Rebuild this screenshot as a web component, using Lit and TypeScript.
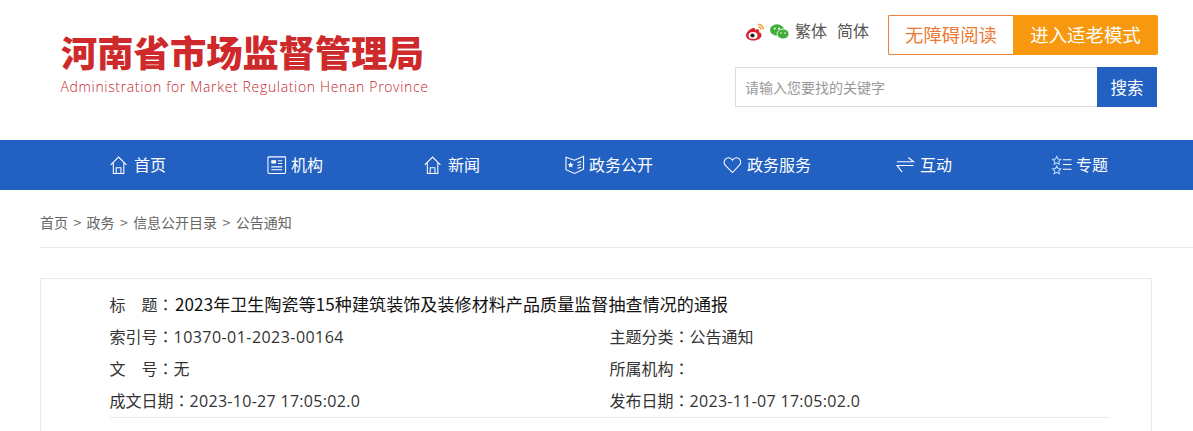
import { LitElement, html, css, svg } from "lit";
import { customElement } from "lit/decorators.js";

const icons: Record<string, unknown> = {
  home: svg`<path d="M.8 11.500 9 3.200l8.200 8.300M3.500 9.200V20.500h11V9.200M6.500 20.500V14.500h5v6"/>`,
  org: svg`<rect x="1" y="3" width="18.500" height="17.500" rx="1"/><rect x="4.500" y="6.500" width="5" height="3.500" fill="#fff" stroke="none"/><path d="M11.500 7h4.500M11.500 10h4.500M4.500 13.500h11.500M4.500 16.500h11.500"/>`,
  book: svg`<path d="M1 3.500 10 6.500 19.500 2.500V16L10 20.500 1 16.500Z"/><path d="M13 9l4-1M13 12l4-1M13 15l4-1"/><path d="m6 8.500 1 2 2 .3-1.500 1.400.4 2-1.900-1-1.900 1 .4-2L3 10.800l2-.3Z" fill="#fff" stroke="none"/>`,
  heart: svg`<path d="M10 19.500 2 11.500C.2 8.500 1.500 4.500 5.500 4c2-.2 3.500.8 4.500 2.500C11 4.800 12.500 3.800 14.500 4c4 .5 5 4.500 3 7.500Z"/>`,
  swap: svg`<path d="M1 8.200H18.500L13 3.700M18.500 12H1L6.500 19"/>`,
  topic: svg`<g stroke="#bcdcff"><path d="m5 2.500 1.300 2.800 3 .4-2.200 2 .6 3-2.700-1.500-2.700 1.500.6-3-2.200-2 3-.4Z"/><path d="m5 12.500 1.300 2.800 3 .4-2.200 2 .6 3-2.700-1.500-2.700 1.500.6-3-2.200-2 3-.4Z"/></g><path d="M11.500 6h9M11.500 11h9M11.500 16h9"/>`,
};

const navItems: [string, string][] = [
  ["home", "首页"],
  ["org", "机构"],
  ["home", "新闻"],
  ["book", "政务公开"],
  ["heart", "政务服务"],
  ["swap", "互动"],
  ["topic", "专题"],
];

const colon = html`<span class="c">：</span>`;

@customElement("app-root")
export class AppRoot extends LitElement {
  static styles = css`
    :host {
      display: block;
      width: 1193px;
      height: 431px;
      overflow: hidden;
      background: #fff;
      font-family: "Noto Sans CJK SC", "Open Sans", sans-serif;
      color: #333;
    }
    .header {
      height: 140px;
      display: flex;
      justify-content: space-between;
      padding: 15px 36px 0 60px;
      box-sizing: border-box;
    }
    .logo { padding-top: 13px; }
    .logo-cn {
      font-size: 36.300px;
      font-weight: 900;
      line-height: 46px;
      margin-left: 1px;
      color: #cf2a2b;
      white-space: nowrap;
    }
    .logo-en {
      font-family: "Open Sans", sans-serif;
      font-size: 14px;
      font-weight: 300;
      line-height: 20px;
      margin-top: 3px;
      margin-left: 0.5px;
      letter-spacing: 0.66px;
      color: #c41f2c;
      white-space: nowrap;
    }
    .tools { width: 422px; }
    .top-row { display: flex; align-items: center; height: 40px; }
    .social { display: flex; align-items: center; gap: 5px; margin: 0 6px 6px 10px; }
    .lang { font-size: 16px; line-height: 24px; color: #555; margin: 0 0 10px 0; }
    .lang + .lang { margin-left: 10px; }
    .btns { margin-left: auto; margin-right: -1px; display: flex; height: 40px; font-size: 18.400px; }
    .btn-a {
      width: 125px;
      box-sizing: border-box;
      border: 1px solid #e8823c;
      border-right: none;
      border-radius: 2px 0 0 2px;
      color: #ee7a36;
      display: flex;
      align-items: center;
      justify-content: center;
      padding-bottom: 2px;
    }
    .btn-b {
      width: 145px;
      box-sizing: border-box;
      background: #f7980f;
      color: #fff;
      border-radius: 0 2px 2px 0;
      display: flex;
      align-items: center;
      justify-content: center;
      padding-bottom: 2px;
    }
    .search { display: flex; height: 40px; margin-top: 12px; }
    .input {
      flex: 1;
      border: 1px solid #ddd;
      border-right: none;
      display: flex;
      align-items: center;
      padding-left: 9px;
      font-size: 14px;
      color: #999;
    }
    .sbtn {
      width: 60px;
      background: #2260c2;
      color: #fff;
      font-size: 16.500px;
      display: flex;
      align-items: center;
      justify-content: center;
    }
    nav {
      height: 50px;
      background: #2260c2;
      display: grid;
      grid-template-columns: 157px 157px 141px 158px 173px 156px 1fr;
      padding-left: 110px;
      box-sizing: border-box;
    }
    .nav-item {
      display: flex;
      align-items: center;
      gap: 4px;
      color: #fff;
      font-size: 16px;
      white-space: nowrap;
      padding-bottom: 2px;
      box-sizing: border-box;
    }
    .nav-item svg {
      width: 20px;
      height: 20px;
      fill: none;
      stroke: #fff;
      stroke-width: 1.100;
      overflow: visible;
    }
    .crumb {
      margin: 0 0 0 40px;
      height: 58px;
      box-sizing: border-box;
      padding-top: 7px;
      border-bottom: 1px solid #e8e8e8;
      display: flex;
      align-items: center;
      font-size: 14px;
      color: #666;
      gap: 5.400px;
    }
    .card {
      margin: 30px 41px 0 40px;
      border: 1px solid #e8e8e8;
      border-bottom: none;
      padding: 9px 42px 0 68.500px;
      height: 160px;
      box-sizing: border-box;
    }
    .title { font-size: 16px; line-height: 32px; color: #333; white-space: nowrap; }
    .title-v { font-size: 17px; color: #111; letter-spacing: 0.1px; margin-left: 1.500px; }
    .meta {
      display: grid;
      grid-template-columns: 500px 1fr;
      grid-auto-rows: 32px;
      height: 98px;
      box-sizing: border-box;
      font-size: 16px;
      line-height: 32px;
      color: #333;
      border-bottom: 1px solid #e8e8e8;
    }
    .meta > div { white-space: nowrap; }
    .num { font-family: "Open Sans", sans-serif; letter-spacing: 0.3px; }
    .id { letter-spacing: 0.45px; }
    .c { font-family: "Noto Sans CJK TC", sans-serif; }
  `;

  render() {
    return html`
      <div class="header">
        <div class="logo">
          <div class="logo-cn">河南省市场监督管理局</div>
          <div class="logo-en">Administration for Market Regulation Henan Province</div>
        </div>
        <div class="tools">
          <div class="top-row">
            <div class="social">
              <svg width="20" height="20" viewBox="0 0 20 20">
                <path d="M8.500 6C5 6.500 1 10 1 13.500c0 3 3.500 5 7.500 5 4.500 0 8-2.500 8-5.500 0-1.800-1.500-2.500-2.500-2.800.8-2-.2-3-1.800-3-1 0-2 .5-2.200.5.300-1.500-.7-2-2-1.700Z" fill="#d8232f"/>
                <ellipse cx="8" cy="13.500" rx="4.500" ry="3.500" fill="#fff"/>
                <circle cx="7.500" cy="13.500" r="2.100" fill="#222"/>
                <path d="M13 2.500c3-.5 5.500 2 5 5M13.300 5c1.500-.2 2.700 1 2.500 2.500" fill="none" stroke="#f0a030" stroke-width="1.400"/>
              </svg>
              <svg width="19" height="18" viewBox="0 0 19 18">
                <ellipse cx="7" cy="7" rx="7" ry="5.800" fill="#3fae3a"/>
                <ellipse cx="13" cy="11" rx="6" ry="5" fill="#3fae3a" stroke="#fff" stroke-width=".8"/>
                <circle cx="4.800" cy="5.500" r="1" fill="#fff"/>
                <circle cx="9" cy="5.500" r="1" fill="#fff"/>
                <circle cx="11" cy="10" r=".8" fill="#fff"/>
                <circle cx="15" cy="10" r=".8" fill="#fff"/>
              </svg>
            </div>
            <span class="lang">繁体</span>
            <span class="lang">简体</span>
            <div class="btns">
              <div class="btn-a">无障碍阅读</div>
              <div class="btn-b">进入适老模式</div>
            </div>
          </div>
          <div class="search">
            <div class="input">请输入您要找的关键字</div>
            <div class="sbtn">搜索</div>
          </div>
        </div>
      </div>
      <nav>
        ${navItems.map(
          ([icon, label]) => html`<div class="nav-item">
            <svg viewBox="0 0 21 21">${icons[icon]}</svg><span>${label}</span>
          </div>`
        )}
      </nav>
      <div class="crumb">
        <span>首页</span><span>&gt;</span><span>政务</span><span>&gt;</span><span>信息公开目录</span><span>&gt;</span><span>公告通知</span>
      </div>
      <div class="card">
        <div class="title">标　题${colon}<span class="title-v">2023年卫生陶瓷等15种建筑装饰及装修材料产品质量监督抽查情况的通报</span></div>
        <div class="meta">
          <div>索引号${colon}<span class="num id">10370-01-2023-00164</span></div>
          <div>主题分类${colon}公告通知</div>
          <div>文　号${colon}无</div>
          <div>所属机构${colon}</div>
          <div>成文日期${colon}<span class="num">2023-10-27 17:05:02.0</span></div>
          <div>发布日期${colon}<span class="num">2023-11-07 17:05:02.0</span></div>
        </div>
      </div>
    `;
  }
}
